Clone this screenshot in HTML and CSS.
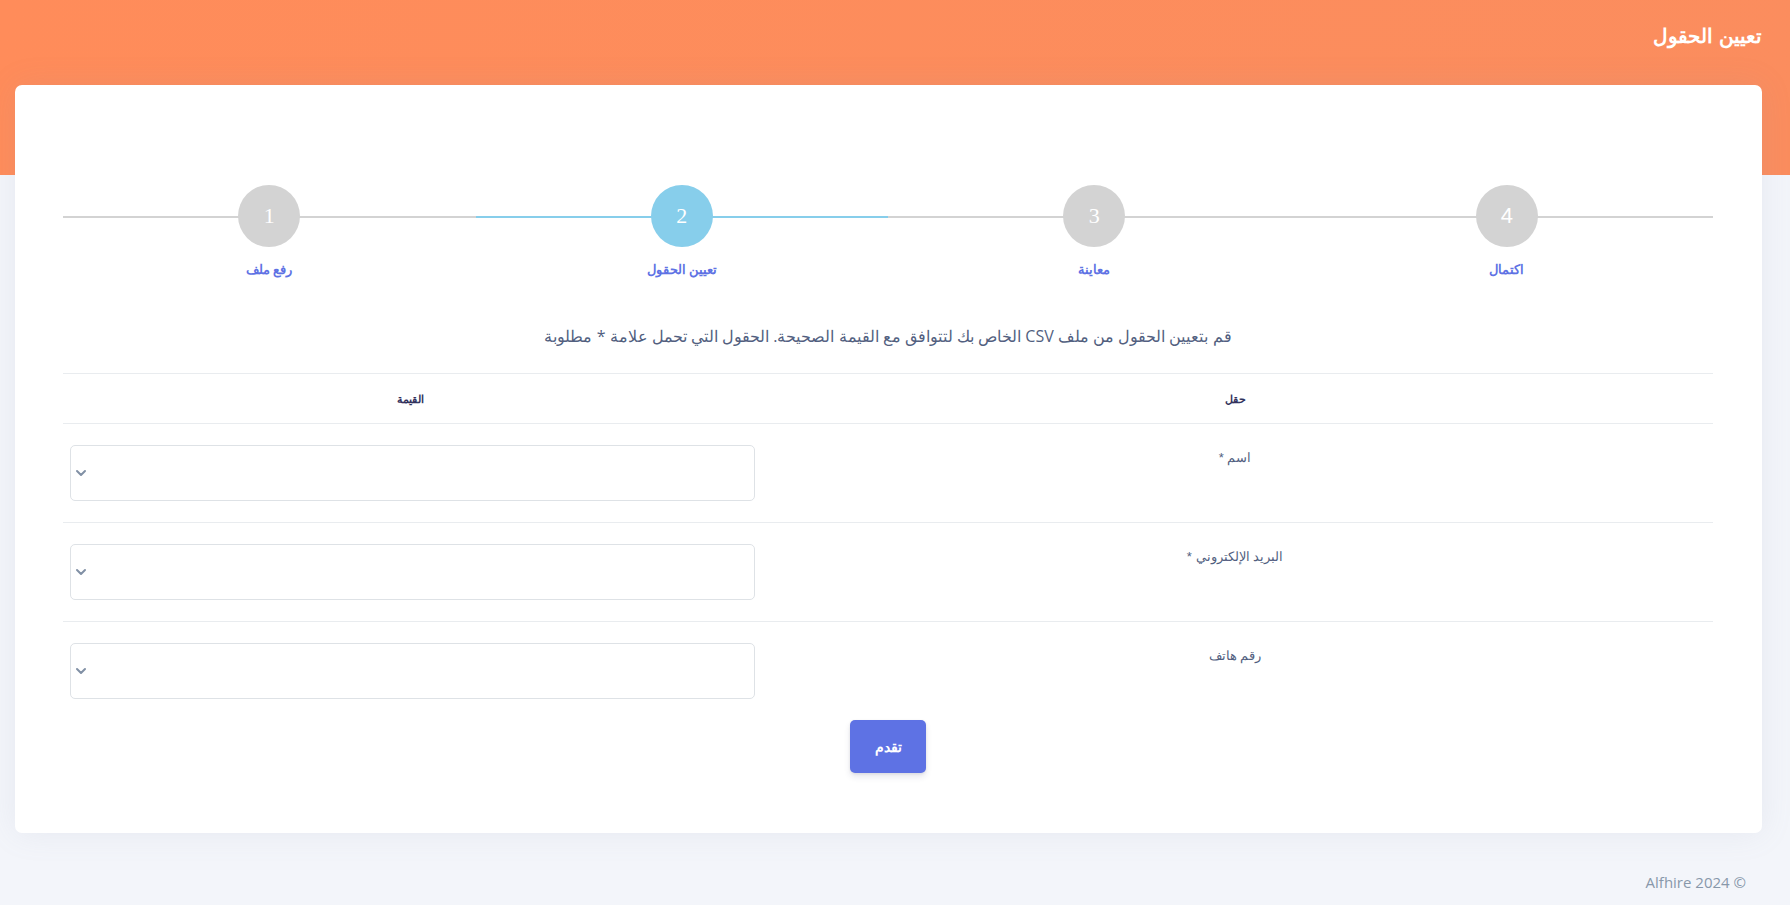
FILE: index.html
```html
<!DOCTYPE html>
<html lang="ar">
<head>
<meta charset="utf-8">
<title>تعيين الحقول</title>
<link rel="stylesheet" href="styles.css">
</head>
<body>
<header class="topbar" dir="rtl">
  <h1 class="page-title">تعيين الحقول</h1>
</header>
<main class="page">
  <section class="card">
    <div class="stepper" dir="ltr">
      <div class="step">
        <div class="step-track"><span class="step-circle num-serif">1</span></div>
        <div class="step-label">رفع ملف</div>
      </div>
      <div class="step step-active">
        <div class="step-track"><span class="step-circle num-serif">2</span></div>
        <div class="step-label">تعيين الحقول</div>
      </div>
      <div class="step">
        <div class="step-track"><span class="step-circle num-serif">3</span></div>
        <div class="step-label">معاينة</div>
      </div>
      <div class="step">
        <div class="step-track"><span class="step-circle num-sans">4</span></div>
        <div class="step-label">اكتمال</div>
      </div>
    </div>

    <p class="intro" dir="rtl">قم بتعيين الحقول من ملف CSV الخاص بك لتتوافق مع القيمة الصحيحة. الحقول التي تحمل علامة * مطلوبة</p>

    <div class="map-table" dir="rtl">
      <div class="th">حقل</div>
      <div class="th">القيمة</div>

      <div class="td td-label">اسم *</div>
      <div class="td td-value">
        <div class="select"><svg class="chev" viewBox="0 0 12 8" width="12" height="8"><path d="M2 2l4 4 4-4" fill="none" stroke="#8190a5" stroke-width="2" stroke-linecap="round" stroke-linejoin="round"/></svg></div>
      </div>

      <div class="td td-label">البريد الإلكتروني *</div>
      <div class="td td-value">
        <div class="select"><svg class="chev" viewBox="0 0 12 8" width="12" height="8"><path d="M2 2l4 4 4-4" fill="none" stroke="#8190a5" stroke-width="2" stroke-linecap="round" stroke-linejoin="round"/></svg></div>
      </div>

      <div class="td td-label td-last">رقم هاتف</div>
      <div class="td td-value td-last">
        <div class="select"><svg class="chev" viewBox="0 0 12 8" width="12" height="8"><path d="M2 2l4 4 4-4" fill="none" stroke="#8190a5" stroke-width="2" stroke-linecap="round" stroke-linejoin="round"/></svg></div>
      </div>
    </div>

    <div class="actions">
      <button class="btn-primary" type="button">تقدم</button>
    </div>
  </section>
</main>
<footer class="footer" dir="ltr">Alfhire 2024 ©</footer>
</body>
</html>
```

FILE: styles.css
```css
* { box-sizing: border-box; }

html, body {
  margin: 0;
  padding: 0;
}

body {
  background: #f3f5fa;
  font-family: "Open Sans", sans-serif;
  color: #525f7f;
  min-height: 905px;
}

.topbar {
  height: 175px;
  background: linear-gradient(100deg, #ff8c5a 0%, #fb8d5e 100%);
  padding: 23px 28px 0 0;
}

.page-title {
  margin: 0;
  color: #fff;
  font-family: "Liberation Sans", sans-serif;
  font-size: 20px;
  font-weight: bold;
  line-height: 26px;
}

.page {
  margin: -90px 28px 0 15px;
}

.card {
  background: #fff;
  border-radius: 7px;
  padding: 100px 49px 60px 48px;
  box-shadow: 0 0 2rem 0 rgba(136, 152, 170, 0.12);
}

/* Stepper */
.stepper {
  display: flex;
}

.step {
  flex: 1 1 0;
  display: flex;
  flex-direction: column;
  align-items: center;
}

.step-track {
  position: relative;
  width: 100%;
  height: 62px;
  display: flex;
  justify-content: center;
}

.step-track::before {
  content: "";
  position: absolute;
  left: 0;
  right: 0;
  top: 31px;
  height: 2px;
  background: #d3d3d3;
}

.step-active .step-track::before {
  background: #87ceeb;
}

.step-circle {
  position: relative;
  width: 62px;
  height: 62px;
  border-radius: 50%;
  background: #d3d3d3;
  color: #fff;
  display: flex;
  align-items: center;
  justify-content: center;
  font-size: 22px;
}

.step-active .step-circle {
  background: #87ceeb;
}

.num-serif { font-family: "Liberation Serif", serif; }
.num-sans { font-family: "Liberation Sans", sans-serif; }

.step-label {
  margin-top: 15px;
  font-family: "Liberation Sans", sans-serif;
  font-size: 12.5px;
  font-weight: bold;
  line-height: 16px;
  color: #5e72e4;
}

/* Intro */
.intro {
  margin: 46px 0 25px;
  text-align: center;
  font-size: 16px;
  line-height: 24px;
  color: #525f7f;
}

/* Mapping table */
.map-table {
  display: grid;
  grid-template-columns: 956px 1fr;
  border-top: 1px solid #e9ecef;
}

.th {
  height: 50px;
  display: flex;
  align-items: center;
  justify-content: center;
  font-family: "Liberation Sans", sans-serif;
  font-size: 11px;
  font-weight: bold;
  color: #32325d;
  border-bottom: 1px solid #e9ecef;
  padding-top: 2px;
}

.td {
  padding: 21px 0;
  border-bottom: 1px solid #e9ecef;
}

.td-last {
  border-bottom: none;
}

.td-label {
  text-align: center;
  font-family: "Liberation Sans", sans-serif;
  font-size: 13px;
  line-height: 22px;
  color: #525f7f;
  padding-top: 23px;
}

.td-value {
  padding-left: 7px;
  padding-right: 2px;
}

.select {
  height: 56px;
  border: 1px solid #dee2e6;
  border-radius: 5px;
  background: #fff;
  display: flex;
  align-items: center;
  justify-content: flex-end;
  padding-left: 4px;
}

.chev {
  display: block;
}

/* Actions */
.actions {
  display: flex;
  justify-content: center;
}

.btn-primary {
  width: 76px;
  height: 53px;
  border: none;
  border-radius: 5px;
  background: #5e72e4;
  color: #fff;
  font-family: "Liberation Sans", sans-serif;
  font-size: 14px;
  font-weight: bold;
  box-shadow: 0 4px 6px rgba(50, 50, 93, 0.11), 0 1px 3px rgba(0, 0, 0, 0.08);
  cursor: pointer;
}

/* Footer */
.footer {
  text-align: right;
  padding: 38px 44px 0 0;
  font-size: 15px;
  line-height: 22px;
  color: #8898aa;
}
```
